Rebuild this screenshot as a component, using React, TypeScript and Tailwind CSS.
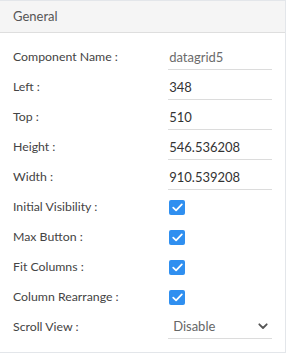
import React from 'react';

const Check = () => (
  <div className="w-[16px] h-[15px] rounded-[2px] bg-[#2f8ff0] flex items-center justify-center">
    <svg width="11" height="9" viewBox="0 0 11 9" fill="none">
      <path d="M1.2 4.6L4.1 7.4L9.8 1.4" stroke="white" strokeWidth="1.7" strokeLinecap="round" strokeLinejoin="round" />
    </svg>
  </div>
);

const TextRow = ({ label, value, muted }: { label: string; value: string; muted?: boolean }) => (
  <div className="flex items-center h-[30px]">
    <span className="w-[157px] text-[12.3px] text-[#444]">{label}</span>
    <div className={`w-[105px] h-[24px] mt-[2px] flex items-center px-[1px] border-b border-[#dcdcdc] text-[13px] ${muted ? 'text-[#6b6b6b]' : 'text-[#333]'}`}>
      {value}
    </div>
  </div>
);

const CheckRow = ({ label }: { label: string }) => (
  <div className="flex items-center h-[30px]">
    <span className="w-[156px] text-[12.3px] text-[#444]">{label}</span>
    <Check />
  </div>
);

export default function App() {
  const rows = [
    { label: 'Left :', value: '348' },
    { label: 'Top :', value: '510' },
    { label: 'Height :', value: '546.536208' },
    { label: 'Width :', value: '910.539208' },
  ];

  return (
    <div className="w-[289px] h-[355px] bg-white" style={{ fontFamily: 'Lato, "Noto Sans", sans-serif' }}>
      <div className="w-[286px] h-[353px] border-r border-b border-t border-[#e3e6ea] flex flex-col">
        <div className="h-[32px] bg-[#f5f5f5] border-b border-[#dedede] flex items-center px-[13px] text-[13px] text-[#555]">
          General
        </div>
        <div className="flex flex-col px-[13px] pt-[9px]">
          <TextRow label="Component Name :" value="datagrid5" muted />
          {rows.map(r => (
            <TextRow key={r.label} label={r.label} value={r.value} />
          ))}
          <CheckRow label="Initial Visibility :" />
          <CheckRow label="Max Button :" />
          <CheckRow label="Fit Columns :" />
          <CheckRow label="Column Rearrange :" />
          <div className="flex items-center h-[30px]">
            <span className="w-[157px] text-[12.3px] text-[#444]">Scroll View :</span>
            <div className="w-[105px] h-[24px] flex items-center justify-between pl-[5px] pr-[4px] border-b border-[#dcdcdc] text-[13px] text-[#666]">
              <span>Disable</span>
              <svg width="10" height="7" viewBox="0 0 10 7" fill="none">
                <path d="M1.3 1.3L5 5L8.7 1.3" stroke="#555" strokeWidth="1.8" strokeLinecap="round" strokeLinejoin="round" />
              </svg>
            </div>
          </div>
        </div>
      </div>
    </div>
  );
}
